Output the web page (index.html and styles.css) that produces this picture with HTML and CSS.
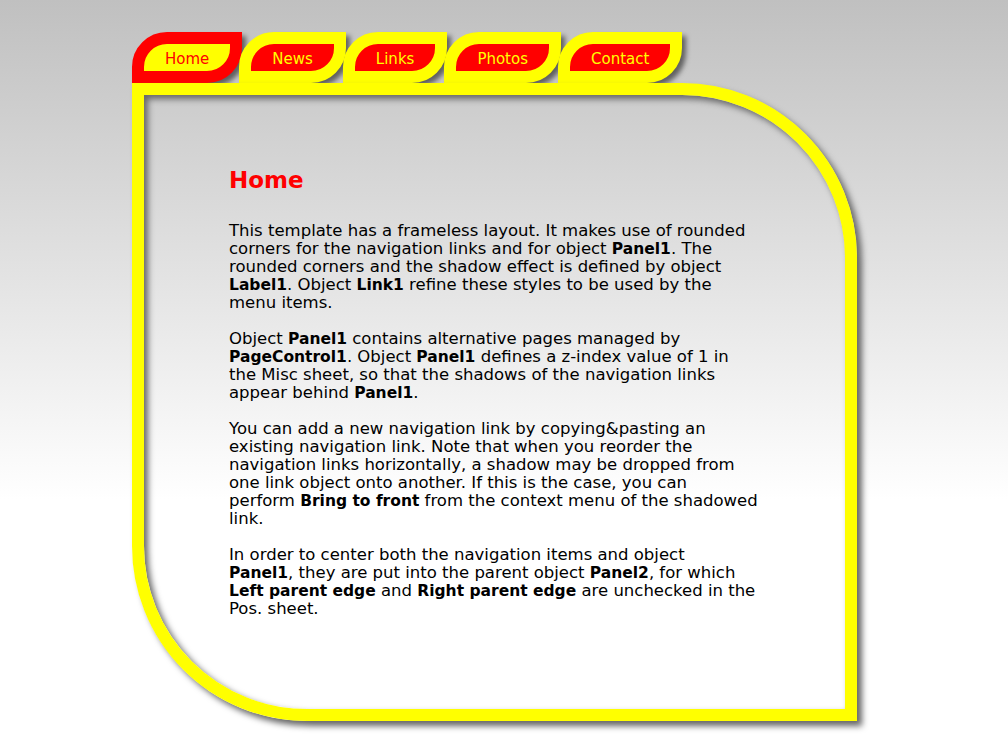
FILE: index.html
```html
<!DOCTYPE html>
<html lang="en">
<head>
<meta charset="utf-8">
<title>Home</title>
<link rel="stylesheet" href="styles.css">
</head>
<body>
<div class="site">
  <nav class="tabs">
    <a class="tab active" href="#">Home</a>
    <a class="tab" href="#">News</a>
    <a class="tab" href="#">Links</a>
    <a class="tab" href="#">Photos</a>
    <a class="tab" href="#">Contact</a>
  </nav>
  <main class="panel">
    <div class="content">
      <h1 class="title">Home</h1>
      <p>This template has a frameless layout. It makes use of rounded<br>corners for the navigation links and for object <b>Panel1</b>. The<br>rounded corners and the shadow effect is defined by object<br><b>Label1</b>. Object <b>Link1</b> refine these styles to be used by the<br>menu items.</p>
      <p>Object <b>Panel1</b> contains alternative pages managed by<br><b>PageControl1</b>. Object <b>Panel1</b> defines a z-index value of 1 in<br>the Misc sheet, so that the shadows of the navigation links<br>appear behind <b>Panel1</b>.</p>
      <p>You can add a new navigation link by copying&amp;pasting an<br>existing navigation link. Note that when you reorder the<br>navigation links horizontally, a shadow may be dropped from<br>one link object onto another. If this is the case, you can<br>perform <b>Bring to front</b> from the context menu of the shadowed<br>link.</p>
      <p>In order to center both the navigation items and object<br><b>Panel1</b>, they are put into the parent object <b>Panel2</b>, for which<br><b>Left parent edge</b> and <b>Right parent edge</b> are unchecked in the<br>Pos. sheet.</p>
    </div>
  </main>
</div>
</body>
</html>
```
FILE: styles.css
```css
html, body {
  margin: 0;
  padding: 0;
}
body {
  min-height: 756px;
  background: #ffffff linear-gradient(to bottom, #c0c0c0 0px, #ffffff 500px) no-repeat;
  background-size: 100% 500px;
  font-family: "DejaVu Sans", Verdana, sans-serif;
  color: #000;
}
.site {
  padding: 32px 0 0 132px;
}
.tabs {
  display: flex;
  height: 51px;
}
.tab {
  position: relative;
  display: block;
  box-sizing: border-box;
  height: 51px;
  padding: 0 21px;
  border: 12px solid #ffff00;
  border-radius: 35px 0 35px 0;
  background: #ff0000;
  color: #ffff00;
  font-size: 15px;
  line-height: 31px;
  text-decoration: none;
  white-space: nowrap;
  box-shadow: 4px 4px 5px #606060;
  margin-left: -3px;
}
.tab:first-child {
  margin-left: 0;
}
.tab.active {
  border-color: #ff0000;
  background: #ffff00;
  color: #ff0000;
}
.panel {
  position: relative;
  z-index: 1;
  display: block;
  box-sizing: border-box;
  width: 725px;
  height: 638px;
  border: 12px solid #ffff00;
  border-radius: 0 175px 0 175px;
  box-shadow: 5px 5px 6px #666, inset 4px 4px 6px #666;
}
.content {
  padding: 72px 0 0 85px;
  width: 560px;
}
.title {
  margin: 0 0 29px;
  font-size: 23px;
  font-weight: bold;
  color: #ff0000;
}
.content p {
  margin: 0 0 18px;
  font-size: 16.5px;
  line-height: 18px;
  white-space: nowrap;
}
.content b {
  font-weight: bold;
  font-size: 15.5px;
}
```
